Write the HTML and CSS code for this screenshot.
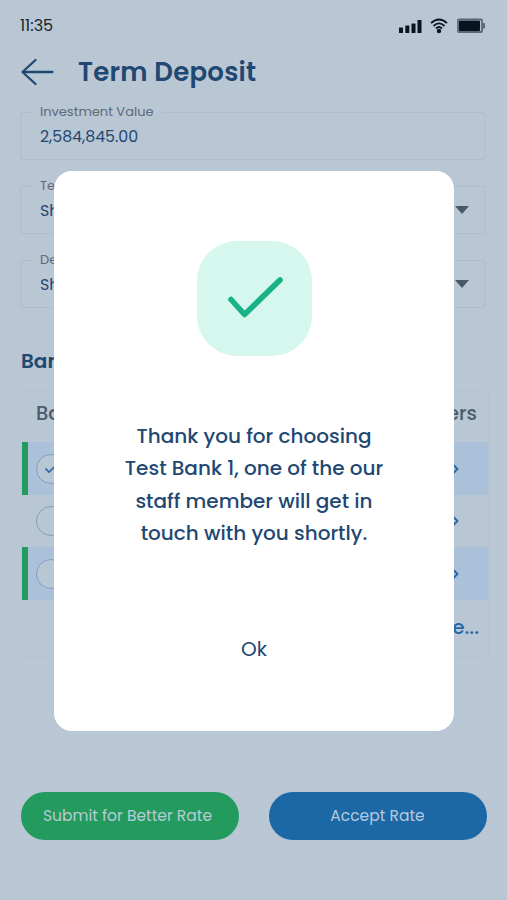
FILE: index.html
```html
<!DOCTYPE html>
<html lang="en">
<head>
<meta charset="utf-8">
<title>Term Deposit</title>
<link rel="stylesheet" href="styles.css">
</head>
<body>
<main class="screen">
  <div class="status">
    <span class="time">11:35</span>
    <svg class="status-icons" width="88" height="18" viewBox="0 0 88 18">
      <g fill="#08141f">
        <rect x="1" y="10.500" width="4" height="5.500" rx=".5"/><rect x="7.300" y="8.500" width="4" height="7.500" rx=".5"/><rect x="13.500" y="6.500" width="4" height="9.500" rx=".5"/><rect x="19.500" y="3" width="4" height="13" rx=".5"/>
        <circle cx="41" cy="14" r="2.2"/>
        <rect x="61" y="3.500" width="21" height="10.500" rx="1"/>
      </g>
      <g fill="none" stroke="#08141f" stroke-width="1.8">
        <path d="M33 6.200Q41-1.200 49 6.200M35.500 9Q41 3.800 46.500 9M38 11.500Q41 8.600 44 11.500"/>
      </g>
      <rect x="60" y="2.500" width="24" height="12.500" rx="1" fill="none" stroke="#5b6977" stroke-width="1.800"/>
      <path d="M84.500 6H86q1 0 1 1v3.500q0 1-1 1h-1.500z" fill="#5b6977"/>
    </svg>
  </div>
  <header class="header">
    <svg width="34" height="28" viewBox="0 0 34 28"><path d="M14.500 2 1.500 14 14.500 26M1.500 14H31.500" fill="none" stroke="#1f4872" stroke-width="2.300" stroke-linecap="round" stroke-linejoin="round"/></svg>
    <h1>Term Deposit</h1>
  </header>
  <section class="fields">
    <fieldset class="field"><legend>Investment Value</legend><span class="value">2,584,845.00</span></fieldset>
    <fieldset class="field"><legend>Tenure</legend><span class="value">Short Term</span><i class="caret"></i></fieldset>
    <fieldset class="field"><legend>Deposit</legend><span class="value">Short Term</span><i class="caret"></i></fieldset>
  </section>
  <h2>Banks</h2>
  <section class="table">
    <div class="thead"><span>Bank</span><span>Offers</span></div>
    <div class="row best"><span class="radio"><svg width="14" height="12" viewBox="0 0 14 12"><path d="M1.500 5.500 5 9 12.500 2" fill="none" stroke="#2567a6" stroke-width="1.700"/></svg></span><svg class="chev" width="7" height="10" viewBox="0 0 7 10"><path d="M1.500 1 5.500 5 1.500 9" fill="none" stroke="#2567a6" stroke-width="1.800"/></svg></div>
    <div class="row"><span class="radio"></span><svg class="chev" width="7" height="10" viewBox="0 0 7 10"><path d="M1.500 1 5.500 5 1.500 9" fill="none" stroke="#2567a6" stroke-width="1.800"/></svg></div>
    <div class="row best"><span class="radio"></span><svg class="chev" width="7" height="10" viewBox="0 0 7 10"><path d="M1.500 1 5.500 5 1.500 9" fill="none" stroke="#2567a6" stroke-width="1.800"/></svg></div>
    <div class="more">More...</div>
  </section>
  <footer class="actions">
    <button class="submit"><span>Submit for Better Rate</span></button>
    <button class="accept"><span>Accept Rate</span></button>
  </footer>
  <div class="overlay">
    <section class="dialog" role="dialog">
      <div class="badge"><svg width="58" height="44" viewBox="0 0 58 44"><path d="M5 23.500 18.500 38.500 54 4" fill="none" stroke="#17b288" stroke-width="5.600" stroke-linecap="round" stroke-linejoin="round"/></svg></div>
      <p class="message">Thank you for choosing<br>Test Bank 1, one of the our<br>staff member will get in<br>touch with you shortly.</p>
      <button class="ok">Ok</button>
    </section>
  </div>
</main>
</body>
</html>
```
FILE: styles.css
```css
* { box-sizing: border-box; }
body { margin: 0; font-family: Poppins, Inter, sans-serif; background: #b9c6d3; }
button { font: inherit; border: 0; padding: 0; }
.screen { position: relative; width: 507px; height: 900px; overflow: hidden; background: #b9c6d3; color: #1f4872; }
.status { display: flex; justify-content: space-between; align-items: center; height: 34px; margin: 9px 21px 0 20px; }
.time { padding-bottom: 1px; font-size: 16px; color: #172530; }
.header { display: flex; align-items: center; gap: 23px; height: 58px; padding-left: 21px; }
h1 { margin: 0; font-size: 26px; line-height: 34px; font-weight: 600; letter-spacing: 0.25px; }
.fields { display: grid; gap: 18px; margin: 3px 22px 0 20px; }
.field { display: flex; justify-content: space-between; align-items: center; min-width: 0; height: 56px; margin: 0; padding: 0 15px 6px 19px; border: 1px solid #afbdca; border-radius: 2px; }
.field legend { margin-left: -8px; padding: 0 8px; font-size: 13px; line-height: 16px; color: #5d6b7a; }
.value { font-size: 15.800px; line-height: 20px; }
.caret { width: 14px; margin-bottom: 2px; border: solid transparent; border-width: 8px 7px 0; border-top-color: #46586a; }
h2 { margin: 37px 0 0 21px; height: 32px; font-size: 20px; line-height: 32px; font-weight: 600; }
.table { margin: 14px 18px 0 21px; height: 266px; border: 1px solid #b5c3d0; border-radius: 3px; }
.thead { display: flex; justify-content: space-between; align-items: center; height: 50px; padding: 0 11px 7px 14px; font-size: 19.500px; font-weight: 500; color: #495b6c; }
.row { display: flex; align-items: center; justify-content: space-between; height: 52px; padding: 0 29px 0 14px; }
.row.best { height: 53px; padding-left: 8px; border-left: 6px solid #239a5e; background: #abc1d9; }
.radio { display: grid; place-items: center; width: 30px; height: 30px; border: 1px solid #819fc2; border-radius: 50%; background: #b9c6d3; }
.more { padding: 15px 9px 0; text-align: right; font-size: 20px; line-height: 24px; font-weight: 500; color: #2567a6; }
.actions { display: flex; justify-content: space-between; margin: 134.500px 20px 0 21px; }
.actions button { width: 218px; height: 48px; padding-bottom: 1px; border-radius: 24px; color: #b7cbd6; font-size: 15.500px; }
.actions .submit { padding-right: 5px; background: #239a5e; }
.actions .accept { padding-right: 1px; background: #1c67a6; color: #b5cade; }
.overlay { position: absolute; inset: 0; display: flex; justify-content: center; align-items: flex-start; padding-top: 170.500px; }
.dialog { display: flex; flex-direction: column; align-items: center; width: 400px; height: 560px; padding: 70px 0 0 1px; border-radius: 18px; background: #fff; }
.badge { display: grid; place-items: center; width: 115px; height: 115px; margin-left: 1px; border-radius: 40px; background: #d5f7ed; }
.message { margin: 64px 0 0; font-size: 20px; line-height: 32.500px; font-weight: 500; text-align: center; white-space: nowrap; }
.ok { margin-top: 82.500px; background: none; color: inherit; font-size: 20px; line-height: 34px; }
```
